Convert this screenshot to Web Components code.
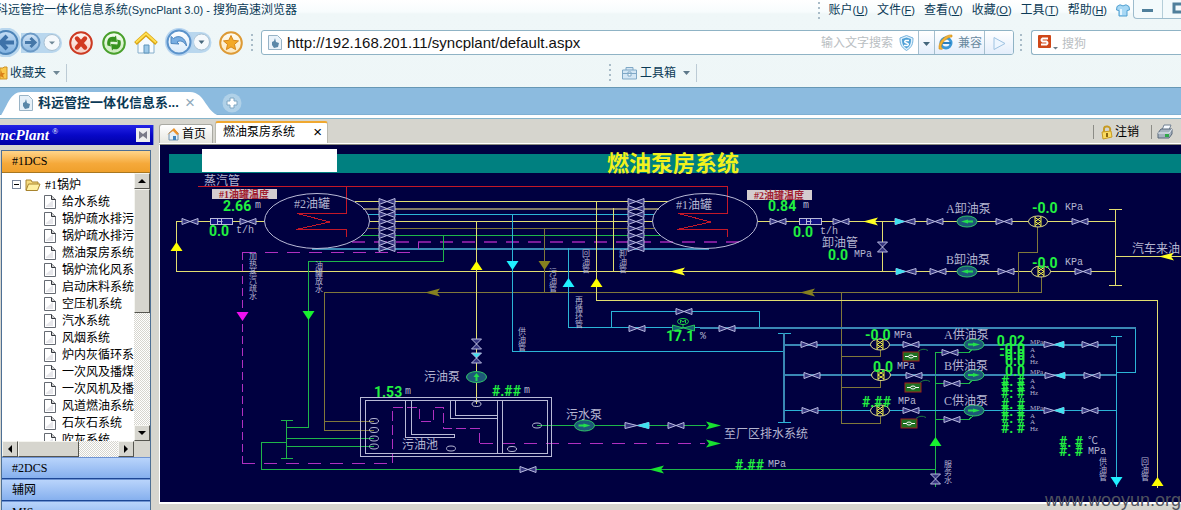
<!DOCTYPE html>
<html lang="zh-CN">
<head>
<meta charset="utf-8">
<title>科远管控一体化信息系统(SyncPlant 3.0)</title>
<style>
html,body{margin:0;padding:0}
body{font:12px/16px "Liberation Sans","Noto Sans CJK SC",sans-serif;color:#0b3a56;overflow:hidden}
</style>
</head>
<body>
<browser-window>
  <window-title slot="chrome">科远管控一体化信息系统<span style="font-size:11px">(SyncPlant 3.0) - </span>搜狗高速浏览器</window-title>
  <nav-toolbar slot="chrome"></nav-toolbar>
  <favorites-bar slot="chrome"></favorites-bar>
  <tab-strip slot="chrome">科远管控一体化信息系...</tab-strip>
  <side-panel></side-panel>
  <work-area><pump-diagram></pump-diagram></work-area>
</browser-window>
<script>
const BASE = `:host,*{box-sizing:border-box}
button{margin:0;padding:0;border:0;background:none;font:inherit;color:inherit;display:block}
a{color:inherit;text-decoration:none}
svg{display:block;flex:none}`;

function define(name, css, html, setup) {
  customElements.define(name, class extends HTMLElement {
    constructor() {
      super();
      const tpl = document.createElement('template');
      tpl.innerHTML = `<style>${BASE}${css}</style>${html}`;
      this.attachShadow({mode: 'open'}).appendChild(tpl.content.cloneNode(true));
      if (setup) setup(this.shadowRoot);
    }
  });
}

/* ---------- browser window ---------- */
define('browser-window', `
:host{display:grid;grid-template-rows:auto 1fr;height:100vh;overflow:hidden;position:relative;background:#d6d5ce}
.chrome{background:linear-gradient(#fff 0,#f7fcfd 12px,#eff7f8 14px,#eef6f7 100%)}
.app{display:grid;grid-template-columns:154px minmax(0,1fr);gap:5px;min-height:0}
.mark{position:absolute;right:0;bottom:0;font-size:18px;line-height:20px;color:#50535e}
`, `
<header class="chrome"><slot name="chrome"></slot></header>
<main class="app"><slot></slot></main>
<div class="mark">www.wooyun.org</div>`);

/* ---------- title and menus ---------- */
define('dot-grip', `:host{display:block;width:2px;height:18px;
background:repeating-linear-gradient(#a9bcc8 0 2px,transparent 2px 5px)}`, '');

define('window-title', `
:host{display:flex;height:29px;align-items:flex-start;white-space:nowrap}
.t{flex:1;min-width:0;overflow:hidden;padding-top:2px;margin-left:-4px}
nav{display:flex;gap:9px;padding:2px 0 0 9px;font-size:12px}
nav a span{font-size:11px}
dot-grip{margin-top:2px}
.shirt{margin:4px 3px 0 9px}
.win{display:flex;height:19px;width:48px;border:1px solid #9dbccd;border-top:0;border-right:0;border-radius:0 0 0 4px;background:#f3fafc;overflow:hidden}
.win button{width:29px;height:18px;flex:none;border-right:1px solid #b5ced9}
`, `
<div class="t"><slot></slot></div>
<dot-grip></dot-grip>
<nav>
<a href="#">账户<span>(<u>U</u>)</span></a><a href="#">文件<span>(<u>F</u>)</span></a><a href="#">查看<span>(<u>V</u>)</span></a><a href="#">收藏<span>(<u>O</u>)</span></a><a href="#">工具<span>(<u>T</u>)</span></a><a href="#">帮助<span>(<u>H</u>)</span></a>
</nav>
<button class="shirt" aria-label="皮肤"><svg width="14" height="13" viewBox="0 0 14 13"><path d="M4 .8 1 2.5.5 6 3 6.500V12h8V6.500L13.500 6 13 2.500 10 .8Q7 3 4 .8Z" fill="#a7d8f5" stroke="#4f9fd0"/><path d="M5 5v6" stroke="#e2f5ff" stroke-width="2"/></svg></button>
<div class="win">
<button aria-label="最小化"><svg width="28" height="18"><rect x="8" y="9" width="11" height="3" fill="#4f7f9b"/></svg></button>
<button aria-label="最大化"><svg width="28" height="18"><rect x="11" y="4" width="12" height="8" fill="none" stroke="#4f7f9b" stroke-width="3"/></svg></button>
</div>`);

/* ---------- navigation toolbar ---------- */
const ring = (cx, cy, r, edge, a, b, id) => `<defs><linearGradient id="${id}" x2="0" y2="1"><stop stop-color="${a}"/><stop offset="1" stop-color="${b}"/></linearGradient></defs><circle cx="${cx}" cy="${cy}" r="${r}" fill="url(#${id})" stroke="${edge}" stroke-width="2"/>`;

define('nav-toolbar', `
:host{display:flex;height:27px;align-items:center}
.icons{display:flex;align-items:center;flex:none;height:29px;margin-right:8px}
.stop{margin-left:5px}.reload{margin-left:7px}.home{margin-left:6px}.undo{margin-left:5px}.star{margin-left:6px}
dot-grip{margin-left:7px}
.addr{flex:1;min-width:0;display:flex;align-items:center;height:25px;border:1px solid #8fb3c5;border-radius:3px;background:#fff;overflow:hidden}
.addr>svg{margin-left:6px;flex:none}
input{border:0;outline:0;background:none;padding:0;margin:0;min-width:0}
.url{flex:1;font:15px/20px "Liberation Sans",sans-serif;color:#111;margin-left:5px}
.hint{color:#b9bec2;margin-right:6px}
.addr button{height:23px;border-left:1px solid #a5bfce;background:linear-gradient(#fff,#e4eefb);flex:none}
.dd{width:16px}
.addr .compat{display:flex;align-items:center;width:50px;gap:4px;color:#6a8aa0;padding-left:2px}
.go{width:29px}
.addr .shield{border:0;background:none;height:16px;margin-right:4px}
.g2{margin:0 9px 0 6px}
.search{width:150px;display:flex;align-items:center;height:25px;border:1px solid #8fb3c5;border-right:0;border-radius:3px 0 0 3px;background:#fff;padding-left:5px;flex:none}
.search input{width:90px;font:12px/16px "Noto Sans CJK SC",sans-serif;margin-left:3px}
.search input::placeholder{color:#b9bec2;opacity:1}
`, `
<div class="icons">
<button aria-label="后退"><svg width="21" height="29" viewBox="0 0 21 29">
<circle cx="6" cy="14.500" r="15" fill="#b9d7ee"/>${ring(6,14.5,11.5,'#4c84b8','#c5def5','#7fb1e0','b1')}<path d="M0 14.500H14M7 8l-6.500 6.500L7 21" stroke="#3d72a9" stroke-width="4" fill="none"/></svg></button>
<button aria-label="前进"><svg width="21" height="29" viewBox="0 0 21 29"><path d="M0 5h21v20H0Z" fill="#b9d7ee"/>${ring(9.5,14.5,9,'#6b9ac6','#d4e6f7','#8fbae2','b2')}<path d="M4 14.500h9M9.500 10l4.500 4.500-4.500 4.500" stroke="#4577a8" stroke-width="3" fill="none"/></svg></button>
<button aria-label="历史"><svg width="21" height="29" viewBox="0 0 21 29"><path d="M0 5h10a10 10 0 0 1 0 20H0Z" fill="#b9d7ee"/><circle cx="10" cy="14.500" r="8" fill="#f5f9fc" stroke="#a8c0d2"/><path d="M7 13.500h6l-3 3Z" fill="#6f8796"/></svg></button>
<button class="stop" aria-label="停止"><svg width="26" height="26" viewBox="0 0 26 26">${ring(13,13,10.8,'#cc3a22','#fff5f0','#f5d0c5','r1')}<path d="m9 8.500 8 9m0-9-8 9" stroke="#d23a20" stroke-width="4.400" stroke-linecap="round"/></svg></button>
<button class="reload" aria-label="刷新"><svg width="26" height="26" viewBox="0 0 26 26">${ring(13,13,10.8,'#49a02c','#f6fff2','#cbeabc','g1')}<path d="M6.500 15.500C5 9 9 5.500 13.500 7L15 5.500l1 6.500-6.500-.5 1.500-1.500C9 11 9 13.500 10 16.500ZM19.500 10.500C21 17 17 20.500 12.500 19L11 20.500l-1-6.500 6.500.5-1.500 1.500c2-1 2-3.500 1-6.500Z" fill="#37931f"/></svg></button>
<button class="home" aria-label="主页"><svg width="26" height="26" viewBox="0 0 26 26"><path d="M5 12v11h16V12l-8-7Z" fill="#f6fbff" stroke="#86aecb"/><path d="M11 15h5v8h-5Z" fill="#9dc9e8" stroke="#5f94ba"/><path d="M2.500 13.500 13 4l10.500 9.500" fill="none" stroke="#d9a312" stroke-width="4"/><path d="M3 12.500 13 3.500l10 9" fill="none" stroke="#ffdf51" stroke-width="2"/></svg></button>
<button class="undo" aria-label="恢复"><svg width="30" height="29" viewBox="0 0 30 29"><path d="M14 4h16v21H14Z" fill="#b9d7ee"/><circle cx="15" cy="14" r="14" fill="#b4d3ef"/>${ring(15,14,11.5,'#5b93cb','#fff','#d8eafa','u1')}<path d="M7 15.500V8.500l2.500 2C15 6 22 10 22.500 18 20 13 16 12 13 14l2 2Z" fill="#79aee2" stroke="#4e86bf"/></svg></button>
<button aria-label="恢复列表"><svg width="18" height="29" viewBox="0 0 18 29"><path d="M0 4h7a10.500 10.500 0 0 1 0 21H0Z" fill="#b9d7ee"/><circle cx="7.500" cy="14" r="8" fill="#f5f9fc" stroke="#a8c0d2"/><path d="M4.500 12.500h6l-3 3.500Z" fill="#48677b"/></svg></button>
<button class="star" aria-label="收藏"><svg width="26" height="26" viewBox="0 0 26 26">${ring(13,13,10.8,'#dd9a35','#fffdf4','#fbe6bb','s1')}<path d="m13 5.500 2.200 4.800 5.300.6-4 3.500 1.100 5.200-4.600-2.700-4.600 2.700 1.100-5.200-4-3.500 5.300-.6Z" fill="#f3a928" stroke="#d8871a"/></svg></button>
<dot-grip></dot-grip>
</div>
<div class="addr">
<svg width="14" height="17" viewBox="0 0 14 17"><path d="M.5 1.500h9l4 4v10H.5Z" fill="#eaf3fa" stroke="#97b3c6"/><path d="m4 8 2-1 1-3 1 4 3 1-1 4-4 1-2-3Z" fill="#5a87a8"/></svg>
<input class="url" aria-label="地址" value="http://192.168.201.11/syncplant/default.aspx">
<span class="hint">输入文字搜索</span>
<button class="shield" aria-label="安全"><svg width="15" height="16" viewBox="0 0 15 16"><path d="M7.500.5 14 3c0 6-1 9-6.500 12.500C2 12 1 9 1 3Z" fill="#dff1fc" stroke="#75b2dc"/><path d="M7.500 2.500 12 4c0 5-1 7-4.500 9.500C4 11 3 9 3 4Z" fill="#4fa0d6"/><path d="M10 5.500H6.500q-2 1.500 1 2.500t1 2.500H5" fill="none" stroke="#fff" stroke-width="1.500"/></svg></button>
<button class="dd" aria-label="地址列表"><svg width="15" height="22"><path d="M4 10h7l-3.500 4Z" fill="#44667c"/></svg></button>
<button class="compat"><svg width="17" height="17" viewBox="0 0 17 17"><circle cx="9" cy="9" r="5" fill="none" stroke="#3d98d6" stroke-width="3"/><path d="M5 9h9" stroke="#2a7fc0" stroke-width="2"/><path d="M15 1C9 0 1 7 2 15q5 1 3-1C2 12 9 3 15 3Z" fill="#f2b233" stroke="#cf8a14" stroke-width=".6"/></svg>兼容</button>
<button class="go" aria-label="转到"><svg width="28" height="22"><path d="M9 5.500 20 11.500 9 17.500Z" fill="#edf6ff" stroke="#9fc3e2"/></svg></button>
</div>
<dot-grip class="g2"></dot-grip>
<div class="search">
<svg width="22" height="17" viewBox="0 0 22 17"><rect x="1" y="1" width="13" height="13" rx="1" fill="#cf4718"/><path d="M11 4.500H5.500q-2 1.500 0 3h4q2 1.500 0 3H4" fill="none" stroke="#fff" stroke-width="2"/><path d="M16 13h5l-2.500 2.500Z" fill="#6d7d88"/></svg>
<input aria-label="搜索" placeholder="搜狗">
</div>`);

/* ---------- favourites bar ---------- */
define('favorites-bar', `
:host{display:grid;grid-template-columns:609px 1fr;height:32px;padding-top:6px;border-bottom:1px solid #6798b5}
div{display:flex;align-items:center;height:22px}
button{display:flex;align-items:center;height:18px}
.sep{width:1px;height:18px;background:#bccbd5;margin-left:6px}
.tri{margin-left:7px}
.tool svg:first-child{margin:0 2px 0 10px}
`, `
<div><button><svg width="10" height="16" viewBox="0 0 10 16"><path d="M0 3h3l1-1h3v12H0Z" fill="#fac94b" stroke="#cd9125"/><path d="m1 5 1 3h3l-2 2 1 3-4-2Z" fill="#d98119"/></svg>收藏夹<svg class="tri" width="7" height="4"><path d="M0 0h7L3.500 4Z" fill="#6f8795"/></svg></button><span class="sep"></span></div>
<div><dot-grip></dot-grip><button class="tool"><svg width="17" height="15" viewBox="0 0 17 15"><path d="M5 4V1.500h7V4M1.500 4h14v9h-14Z" fill="#d3e6f4" stroke="#7fa8c6"/><path d="M1 7.500h15M7 6h3v4H7Z" fill="#fff" stroke="#7fa8c6"/></svg>工具箱<svg class="tri" width="7" height="4"><path d="M0 0h7L3.500 4Z" fill="#5d7889"/></svg></button><span class="sep"></span></div>`);

/* ---------- browser tabs ---------- */
define('tab-strip', `
:host{display:flex;height:32px;background:linear-gradient(#8cbbdf 0 26px,#7fb0d3 26px 27px,#fff 27px 30px,#86b4ca 30px 31px,#d6d5ce 31px)}
.tab{display:flex;align-items:center;position:relative;width:222px;height:29px;margin-top:2px;font-weight:bold}
.bg{position:absolute;inset:1px 0 auto 0;z-index:0}
.tab>:not(.bg){position:relative;z-index:1}
.ico{margin:0 5px 4px 19px}
.tab span{margin-bottom:4px;width:143px;white-space:nowrap;font-size:13px}
.tab button{margin:0 0 4px 4px;color:#8fa9ba;font:17px/16px "Liberation Sans",sans-serif}
.add{margin-top:5px;align-self:flex-start}
`, `
<div class="tab"><svg class="bg" width="222" height="26" viewBox="0 0 222 26"><path d="M0 26C8 14 10 1 22 1H190C206 1 206 24 222 25V26Z" fill="#fff"/></svg>
<svg class="ico" width="14" height="16" viewBox="0 0 14 16"><path d="M.5.500h9l4 4v11H.5Z" fill="#e6f0f8" stroke="#9ab4c6"/><path d="m4 8 2-1 1-3 1 4 3 1-1 4-4 1-2-3Z" fill="#5a87a8"/></svg>
<span><slot></slot></span><button aria-label="关闭标签">×</button></div>
<button class="add" aria-label="新标签"><svg width="20" height="20" viewBox="0 0 20 20"><circle cx="10" cy="10" r="9.500" fill="#b0d1e8"/><path d="M8 5h4v3h3v4h-3v3H8v-3H5V8h3Z" fill="#fff" stroke="#7fa6c2"/></svg></button>`);

/* ---------- side panel ---------- */
const items = ['给水系统','锅炉疏水排污系统','锅炉疏水排污系统','燃油泵房系统','锅炉流化风系统','启动床料系统','空压机系统','汽水系统','风烟系统','炉内灰循环系统','一次风及播煤系统','一次风机及播煤系统','风道燃油系统','石灰石系统','吹灰系统'];
const arrow = d => `<svg width="14" height="14" viewBox="0 0 14 14"><path d="${d}" fill="#000"/></svg>`;
define('side-panel', `
:host{display:flex;flex-direction:column;min-width:0;color:#000;padding-top:5px;font-family:"Liberation Serif","Noto Sans CJK SC",serif}
.logo{display:flex;align-items:center;justify-content:flex-end;height:20px;background:linear-gradient(#2424e6,#0808c8 50%,#0000a4);border-right:1px solid #7f91c8;overflow:hidden;color:#fff;padding-right:3px;flex:none}
.logo b{font:italic bold 15px/18px "Liberation Serif",serif;white-space:nowrap}
.logo sup{font-size:8px;line-height:8px;margin:0 78px 6px 3px;font-style:italic}
.logo button{width:14px;height:14px;background:#eee;flex:none}
.list{margin:5px 3px 0 1px;border:1px solid #4d6f94;border-width:1px 1px 0;background:#fff}
h2{margin:0;font:12px/21px "Liberation Serif","Noto Sans CJK SC",serif;padding-left:10px;height:22px;background:linear-gradient(#b9d4fb,#86b0ee);border-bottom:1px solid #1d4795;border-top:1px solid #6e93d2}
h2.on{background:linear-gradient(#ffd58a,#f5a93a 60%,#efa02c);border-color:#a87720;border-top:0}
.tree{display:grid;grid-template:1fr 16px/1fr 16px;height:calc(100vh - 226px)}
.view{overflow:hidden;min-width:0}
ul{list-style:none;margin:0;padding:3px 0 0 42px;white-space:nowrap}
.root{display:flex;align-items:center;height:17px;margin-left:-32px;gap:4px}
li{display:flex;align-items:center;height:17px;gap:6px}
.bar{display:flex;background:repeating-conic-gradient(#d6d5ce 0 25%,#fff 0 50%) 0 0/2px 2px}
.v{flex-direction:column}
.bar button,.thumb{background:#d6d5ce;border:1px solid;border-color:#f5f5f0 #55554f #55554f #f5f5f0;width:16px;height:16px;flex:none}
.v .thumb{height:124px}.v .sp,.h .sp{flex:1}
.h .thumb{width:61px}
.corner{background:#d6d5ce}
`, `
<div class="logo"><b>SyncPlant</b><sup>®</sup><button aria-label="收起"><svg width="14" height="14"><path d="M3 3v8l4-3 4 3V3L7 6Z" fill="#7b7b88"/></svg></button></div>
<div class="list">
<h2 class="on">#1DCS</h2>
<div class="tree">
<div class="view"><ul><li class="root"><svg width="9" height="9"><rect x=".5" y=".5" width="8" height="8" fill="#fff" stroke="#7a869a"/><path d="M2 4.500h5" stroke="#000"/></svg><svg width="16" height="14" viewBox="0 0 16 14"><path d="M1 12V2h5l1 2h6v3" fill="#f7dc80" stroke="#a8842e"/><path d="M1 12.500 3.500 6h11.500l-2.500 6.500Z" fill="#fff0a2" stroke="#a8842e"/></svg>#1锅炉</li></ul></div>
<div class="bar v"><button aria-label="向上">${arrow('M3 9h8L7 5Z')}</button><div class="thumb"></div><div class="sp"></div><button aria-label="向下">${arrow('M3 5h8L7 9Z')}</button></div>
<div class="bar h"><button aria-label="向左">${arrow('M9 3v8L5 7Z')}</button><div class="thumb"></div><div class="sp"></div><button aria-label="向右">${arrow('M5 3v8l4-4Z')}</button></div>
<div class="corner"></div>
</div>
<h2>#2DCS</h2><h2>辅网</h2><h2>MIS</h2>
</div>`, root => {
  const ul = root.querySelector('ul');
  items.forEach(t => {
    const li = document.createElement('li');
    li.innerHTML = `<svg width="12" height="14" viewBox="0 0 12 14"><path d="M.5.500h7l4 4v9H.5Z" fill="#fff" stroke="#666b73"/><path d="M2 11 9 5v7H2Z" fill="#e6e6ea"/><path d="M7.500.500v4h4" fill="#ccc" stroke="#33363c"/></svg><a href="#">${t}</a>`;
    ul.appendChild(li);
  });
});

/* ---------- work area ---------- */
define('work-area', `
:host{display:flex;flex-direction:column;min-width:0;color:#000}
.tabs{display:flex;align-items:flex-end;height:24px;border-bottom:1px solid #fff;flex:none;font-size:12px}
.t1{display:flex;align-items:center;gap:2px;width:54px;height:19px;padding-left:6px;border:1px solid #a9a9a2;border-bottom:0;border-radius:3px 3px 0 0;background:linear-gradient(#fff,#e6e6e0)}
.t2{display:flex;align-items:center;justify-content:space-between;width:113px;height:22px;margin-left:2px;padding:0 5px 2px 7px;border:1px solid #b9b9b0;border-top:2px solid #f0a830;border-bottom:0;background:#fff;border-radius:3px 3px 0 0}
.t2 button{font:15px/14px "Liberation Sans",sans-serif}
.right{display:flex;align-items:center;margin-left:auto;height:22px;padding-right:8px}
.right i{width:1px;height:14px;background:#8c8c86}
.out{display:flex;align-items:center;gap:2px;margin:0 12px 0 7px}
.print{margin-left:5px}
.canvas{border:solid #fff;border-width:1px 0 2px 1px;border-top-color:#88887f;background:#000040}
`, `
<div class="tabs">
<button class="t1"><svg width="14" height="14" viewBox="0 0 14 14"><path d="M3 6v7h9V6L8 2Z" fill="#e5eff8" stroke="#7292ad"/><path d="M1 8 8 1l5 6-2 1-4-4Z" fill="#ef9329"/><path d="M7 9h3v4H7Z" fill="#3d82bd"/></svg>首页</button>
<div class="t2"><span>燃油泵房系统</span><button aria-label="关闭">×</button></div>
<div class="right"><i></i><button class="out"><svg width="12" height="15" viewBox="0 0 12 15"><path d="M3 8V4q0-3 3.500-2.500T9 6" fill="none" stroke="#c79a22" stroke-width="2"/><path d="m1 7 9-1 1 6-9 2Z" fill="#fadb60" stroke="#c79a22"/><path d="M6 8v4" stroke="#8a6510" stroke-width="2"/></svg>注销</button><i></i>
<button class="print" aria-label="打印"><svg width="16" height="16" viewBox="0 0 16 16"><path d="m5 6 2-5h7l-2 5Z" fill="#f7fbff" stroke="#738294"/><path d="m1 9 3-4h11v5l-3 4H1Z" fill="#a6b2bf" stroke="#58687a"/><path d="M1 9h11l3-4" fill="none" stroke="#e9eef4"/><path d="M8 10h4v3H8Z" fill="#2fa84a"/></svg></button></div>
</div>
<div class="canvas"><slot></slot></div>`);

/* ---------- process diagram ---------- */
const Y='#e2de70', C='#2bb4d6', G='#1fb54a', O='#80783a', P='#b030c0', R='#c41828', B='#3a88b4', W='#b9bad6';
const line = (d, c, w = 1, extra = '') => `<path d="${d}" fill="none" stroke="${c}" stroke-width="${w}" ${extra}/>`;
const valve = (x, y) => `<path class="v" d="M${x-8} ${y-3}v6l8-3 8 3v-6l-8 3Z"/>`;
const vvalve = (x, y, top = '#35357e') => `<path class="v" d="M${x-5} ${y+5}h10l-5-5Z"/><path d="M${x-5} ${y-5}h10l-5 5Z" fill="${top}" stroke="#b9bae0"/>`;
const check = (x, y, side, r = 10) => `<path class="v" d="M${x-r} ${y-3}v6l${r}-3 ${r} 3v-6l-${r} 3Z"/>` +
  (side === 'l' ? `<path d="M${x-r} ${y-3.500}v7l${r}-3.500Z" fill="#40e0f0"/>` : `<path d="M${x+r} ${y-3.500}v7l-${r}-3.500Z" fill="#40e0f0"/>`);
const arrows = {u:(x,y)=>`M${x-6} ${y+4}h12l-6-9Z`, d:(x,y)=>`M${x-6} ${y-4}h12l-6 9Z`, l:(x,y)=>`M${x-8} ${y}l15-4-3 4 3 4Z`, r:(x,y)=>`M${x+8} ${y}l-15-4 3 4-3 4Z`};
const arr = (k, x, y, c) => `<path d="${arrows[k](x, y)}" fill="${c}"/>`;
const pump = (x, y, k) => `<ellipse cx="${x}" cy="${y}" rx="10" ry="5.500" fill="#1d5878" stroke="#2fc468"/><path d="${k==='u' ? `M${x-3} ${y}h6l-3-4ZM${x-1} ${y}h2v4h-2Z` : k==='l' ? `M${x-6} ${y}l7-2v1h5v2h-5v1Z` : `M${x+6} ${y}l-7-2v1h-5v2h5v1Z`}" fill="#22e04c"/>`;
const gauge = (x, y) => `<ellipse cx="${x}" cy="${y}" rx="9.500" ry="5.500" fill="#000040" stroke="#e2de90"/><path d="M${x-3} ${y-5}v10M${x+3} ${y-5}v10M${x-3} ${y-4}l6 4-6 4M${x+3} ${y-4}l-6 4 6 4" fill="none" stroke="#f4f04a"/>`;
const oval = (x, y) => `<ellipse cx="${x}" cy="${y}" rx="4.500" ry="2.500" fill="none" stroke="${W}"/>`;
const meter = x => `<rect x="${x}" y="218.500" width="22" height="6" fill="#10107c" stroke="${W}"/><path d="M${x+7} 219v5M${x+7} 221.500h5M${x+11} 219v5" stroke="${W}"/>`;
const motor = (x, y) => `<rect x="${x-8}" y="${y-4.500}" width="16" height="9" fill="#1d7022" stroke="#a02318"/><path d="M${x-6} ${y}h12" stroke="#fff"/><ellipse cx="${x}" cy="${y}" rx="2.500" ry="1.500" fill="#1d7022" stroke="#fff"/><path d="M${x+7} ${y-5}q5-4 10-1" fill="none" stroke="#1c7a40"/>`;
const lab = (x, y, s) => `<text class="l" x="${x}" y="${y+4}">${s}</text>`;
const unit = (x, y, s) => `<text class="u" x="${x}" y="${y+3}">${s}</text>`;
const small = (x, y, s) => `<text class="s" x="${x}" y="${y+3}">${s}</text>`;
const val = (x, y, s) => `<text class="n" x="${x}" y="${y+5}">${s}</text>`;
const mid = (x, y, s) => `<text class="n" text-anchor="end" x="${x}" y="${y+5}">${s}</text>`;
const vert = (x, y, s) => `<text class="w" x="${x}" y="${y}">${s}</text>`;
const tag = (x, y, s) => `<rect x="${x}" y="${y-5}" width="65" height="10" fill="#d4cccf"/><text class="g" x="${x+32}" y="${y+4}">${s}</text>`;

const pipes = [
  line('M198 186.500H727.500V213.500H678L711 222 677 229.500H727.500V237M346.500 186V213.500H297L330 222 296 229.500H346.500V237', R),
  line('M355 201.500H668', Y), line('M363 208.500H659', '#827a68', 2), line('M368 214.500H654', C), line('M370 221.500H652', Y),
  line('M368 228.500H654', O), line('M362 235.500H660', G), line('M312 248.500H709', B, 2),
  line('M352 242H740', '#7a1c98', 2, 'stroke-dasharray="13 9"'),
  line('M242.500 252.500H412M418.500 249V242', P, 1, 'stroke-dasharray="13 9"'),
  line('M242.500 252V463', P, 1, 'stroke-dasharray="8 4"'),
  line('M242 463.500H392.500M480 443.500H705', P, 1, 'stroke-dasharray="13 9"'),
  line('M392.500 463V407.500H419.500V421.500H433.500V407.500H443.500V428.500H479.500V443.500', P, 1, 'stroke-dasharray="10 4"'),
  line('M264 221.500H176.500V271.500H1115', Y),
  line('M443.500 235V261.500H308.500V427.500H286.500M281 420.500H293M281 458.500H293M286.500 420V458M286 438.500H374M286 446.500H374M286 442.500H261.500V469.500H935M935.500 487V352.500H969L973 349M935 383.500H969L973 380M935 419.500H969L973 416M537 425.500H706', G),
  line('M374 421.500H325M374 430.500H324.500V292.500H1041.500V277M1037.500 227V252.500H1018.500V292M544.500 228V292M841.500 292V423.500H880.500V414M841 356.500H880.500V349M841 387.500H880.500V380', O),
  line('M476.500 221V404M596.500 201V300.500H1157.500V488M613.500 208V271M758 221.500H1115M882.500 221V271M1115.500 209V285M1109 209.500H1122M1109 285.500H1122M1115 256.500H1181', Y),
  line('M512.500 214V351.500H784M568.500 248V327.500H700M611.500 328V311.500H759.500V328M778 333.500H791M778 422.500H791M1111 336.500H1122M1116.500 336V487M784 410.500H1116M1135.500 328V372.500H1116', C),
  line('M700 328H1136M784 345H1116M784 375H1116M784 333V422', B, 2),
].join('');

const plant = [
  [190,221],[248,221],[778,221],[841,221],[935,221],[1004,221],[1080,221],[938,271],[1006,271],[1083,271],
  [684,311],[637,328],[727,328],[528,469],[676,425],[950,352],[952,383],[952,419],
  [809,344],[911,344],[1090,344],[812,375],[914,375],[1092,375],[810,410],[911,410],[1090,410],
].map(p => valve(p[0], p[1] + .5)).join('') +
  [201,208,214,221,228,235,242,248].map(y => valve(387, y + .5) + valve(636, y + .5)).join('') +
  vvalve(476.5, 344) + vvalve(476.5, 358, '#40e0f0') + vvalve(882.5, 247) + vvalve(935.5, 479) +
  check(905, 221.5, 'l') + check(906, 271.5, 'l') + check(1054, 344.5, 'r') + check(1055, 375.5, 'r') + check(1054, 410.5, 'r') + check(637, 425.5, 'r', 12) +
  meter(210.5) + meter(799.5) +
  pump(476.5, 377, 'u') + pump(967, 221.5, 'l') + pump(967, 271.5, 'l') + pump(974, 344.5, 'r') + pump(974, 375, 'r') + pump(974, 410.5, 'r') + pump(584.5, 425.5, 'r') +
  gauge(1038, 221.5) + gauge(1041, 271.5) + gauge(880, 344.5) + gauge(881, 375) + gauge(880, 410.5) +
  motor(911, 356.5) + motor(913, 387.5) + motor(909, 423.5) +
  arr('u',176.5,247,'#ff0') + arr('u',476.5,266,'#ff0') + arr('u',596.5,283,'#ff0') + arr('u',1157.5,482,'#ff0') +
  arr('u',568.5,283,'#20f0ff') + arr('d',512.5,265,'#20f0ff') + arr('d',1116.5,481,'#20f0ff') + arr('d',544.5,265,'#85801f') +
  arr('d',242.5,316,'#f010f0') + arr('d',308.5,315,'#18f030') + arr('u',935.5,442,'#18f030') +
  arr('l',678,271.5,'#ff2') + arr('l',871,221.5,'#ff2') + arr('l',1167,256.5,'#ff2') + arr('l',433,292.5,'#85801f') + arr('l',808,292.5,'#85801f') +
  arr('l',657,469.5,'#18e030') + arr('r',713,425.5,'#18e030') + arr('r',713,443.5,'#18e030') +
  `<path d="M672.500 325v6l11-3 11 3v-6l-11 3Z" fill="#145c70" stroke="#25c45a"/><ellipse cx="683" cy="321.500" rx="5.500" ry="3" fill="none" stroke="#22d048"/><path d="M680.500 323v-3l2.500 2 2.500-2v3M683 324v3" fill="none" stroke="#22d048"/>`;

const pool = `<g fill="none" stroke="${W}" shape-rendering="crispEdges"><path d="M360.500 397.500H551.500V456.500H360.500ZM365.500 400.500H547.500V453.500H365.500ZM405.500 400V437.500H454.500V434.500H411.500V400M450.500 400V418.500H497M455.500 400V415.500H497M497.500 400V453M502.500 400V453"/></g>` +
  [[374,421],[374,430],[374,438.5],[374,446.5],[451,448.5],[512,449],[537,425.5],[476.5,404]].map(p => oval(...p)).join('');

const texts =
  lab(204,181,'蒸汽管') + lab(294,204,'#2油罐') + lab(676,205,'#1油罐') + lab(424,377,'污油泵') + lab(566,415,'污水泵') + lab(402,445,'污油池') +
  lab(724,434,'至厂区排水系统') + lab(822,243,'卸油管') + lab(946,209,'A卸油泵') + lab(946,260,'B卸油泵') + lab(944,335,'A供油泵') + lab(944,366,'B供油泵') + lab(944,401,'C供油泵') + lab(1132,249,'汽车来油') +
  tag(212,194,'#1油罐温度') + tag(747,195,'#2油罐温度') +
  val(223,206,'2.66') + unit(255,205,'m') + val(209,231,'0.0') + unit(236,230,'t/h') + val(768,206,'0.84') + unit(803,205,'m') +
  val(793,232,'0.0') + unit(820,231,'t/h') + val(828,255,'0.0') + unit(854,254,'MPa') + val(1032,208,'-0.0') + unit(1065,207,'KPa') + val(1032,263,'-0.0') + unit(1065,262,'KPa') +
  val(666,336,'17.1') + unit(700,336,'%') + val(374,392,'1.53') + unit(405,391,'m') + val(492,391,'#.##') + unit(524,390,'m') + val(735,465,'#.##') + unit(768,464,'MPa') +
  val(865,335,'-0.0') + unit(894,335,'MPa') + val(873,367,'0.0') + unit(897,366,'MPa') + val(862,402,'#.##') + unit(898,401,'MPa') +
  mid(1025,341,'0.02') + mid(1025,349,'-0.0') + mid(1025,355,'-0.0') + mid(1025,361,'0.0') + mid(1025,371,'0.0') +
  [381,387,393,404,411,418,428].map(y => mid(1025,y,'#. #')).join('') +
  [[341,'MPa'],[349,'A'],[355,'A'],[361,'Hz'],[371,'MPa'],[380,'A'],[386,'A'],[392,'Hz'],[407,'MPa'],[415,'A'],[421,'A'],[428,'Hz']].map(p => small(1030,p[0],p[1])).join('') +
  mid(1083,442,'#. #') + mid(1083,451,'#. #') + unit(1088,441,'℃') + unit(1088,451,'MPa') +
  vert(252,252,'加热蒸汽疏水') + vert(318,261,'油罐放水') + vert(585,249,'回油管') + vert(622,249,'卸油管') + vert(552,268,'污油管') + vert(578,296,'再循环管') + vert(521,327,'供油管') +
  vert(947,460,'服务水') + vert(1102,457,'供油管') + vert(1144,457,'回油管');

define('pump-diagram', `
:host{display:block}
svg{width:100%;height:auto}
text{font-family:"Liberation Serif","Noto Sans CJK SC",serif;fill:#b4b5d0}
.v{fill:#35357e;stroke:#b9bae0}
.l{font-size:12px}
.u{font:10px "Liberation Mono","Noto Sans CJK SC",monospace}
.s{font-size:7px}
.n{font:bold 14px Roboto,sans-serif;fill:#22f040}
.w{font-size:8px;writing-mode:vertical-rl}
.g{font-size:10px;font-weight:bold;fill:#a02030;text-anchor:middle}
.h{font-size:22px;font-weight:bold;fill:#f2f21c;text-anchor:middle}
`, `<svg viewBox="160 145 1021 357" role="img" aria-label="燃油泵房系统">
<rect x="169" y="154" width="1012" height="19" fill="#008080"/><rect x="202" y="149" width="135" height="23" fill="#fff"/>
<text class="h" x="673" y="171">燃油泵房系统</text>
<g shape-rendering="crispEdges">${pipes}</g>
<ellipse cx="317" cy="221" rx="52.500" ry="27.500" fill="none" stroke="${W}"/><ellipse cx="705" cy="221" rx="52.500" ry="27.500" fill="none" stroke="${W}"/>
${pool}${plant}${texts}</svg>`);
</script>
</body>
</html>
